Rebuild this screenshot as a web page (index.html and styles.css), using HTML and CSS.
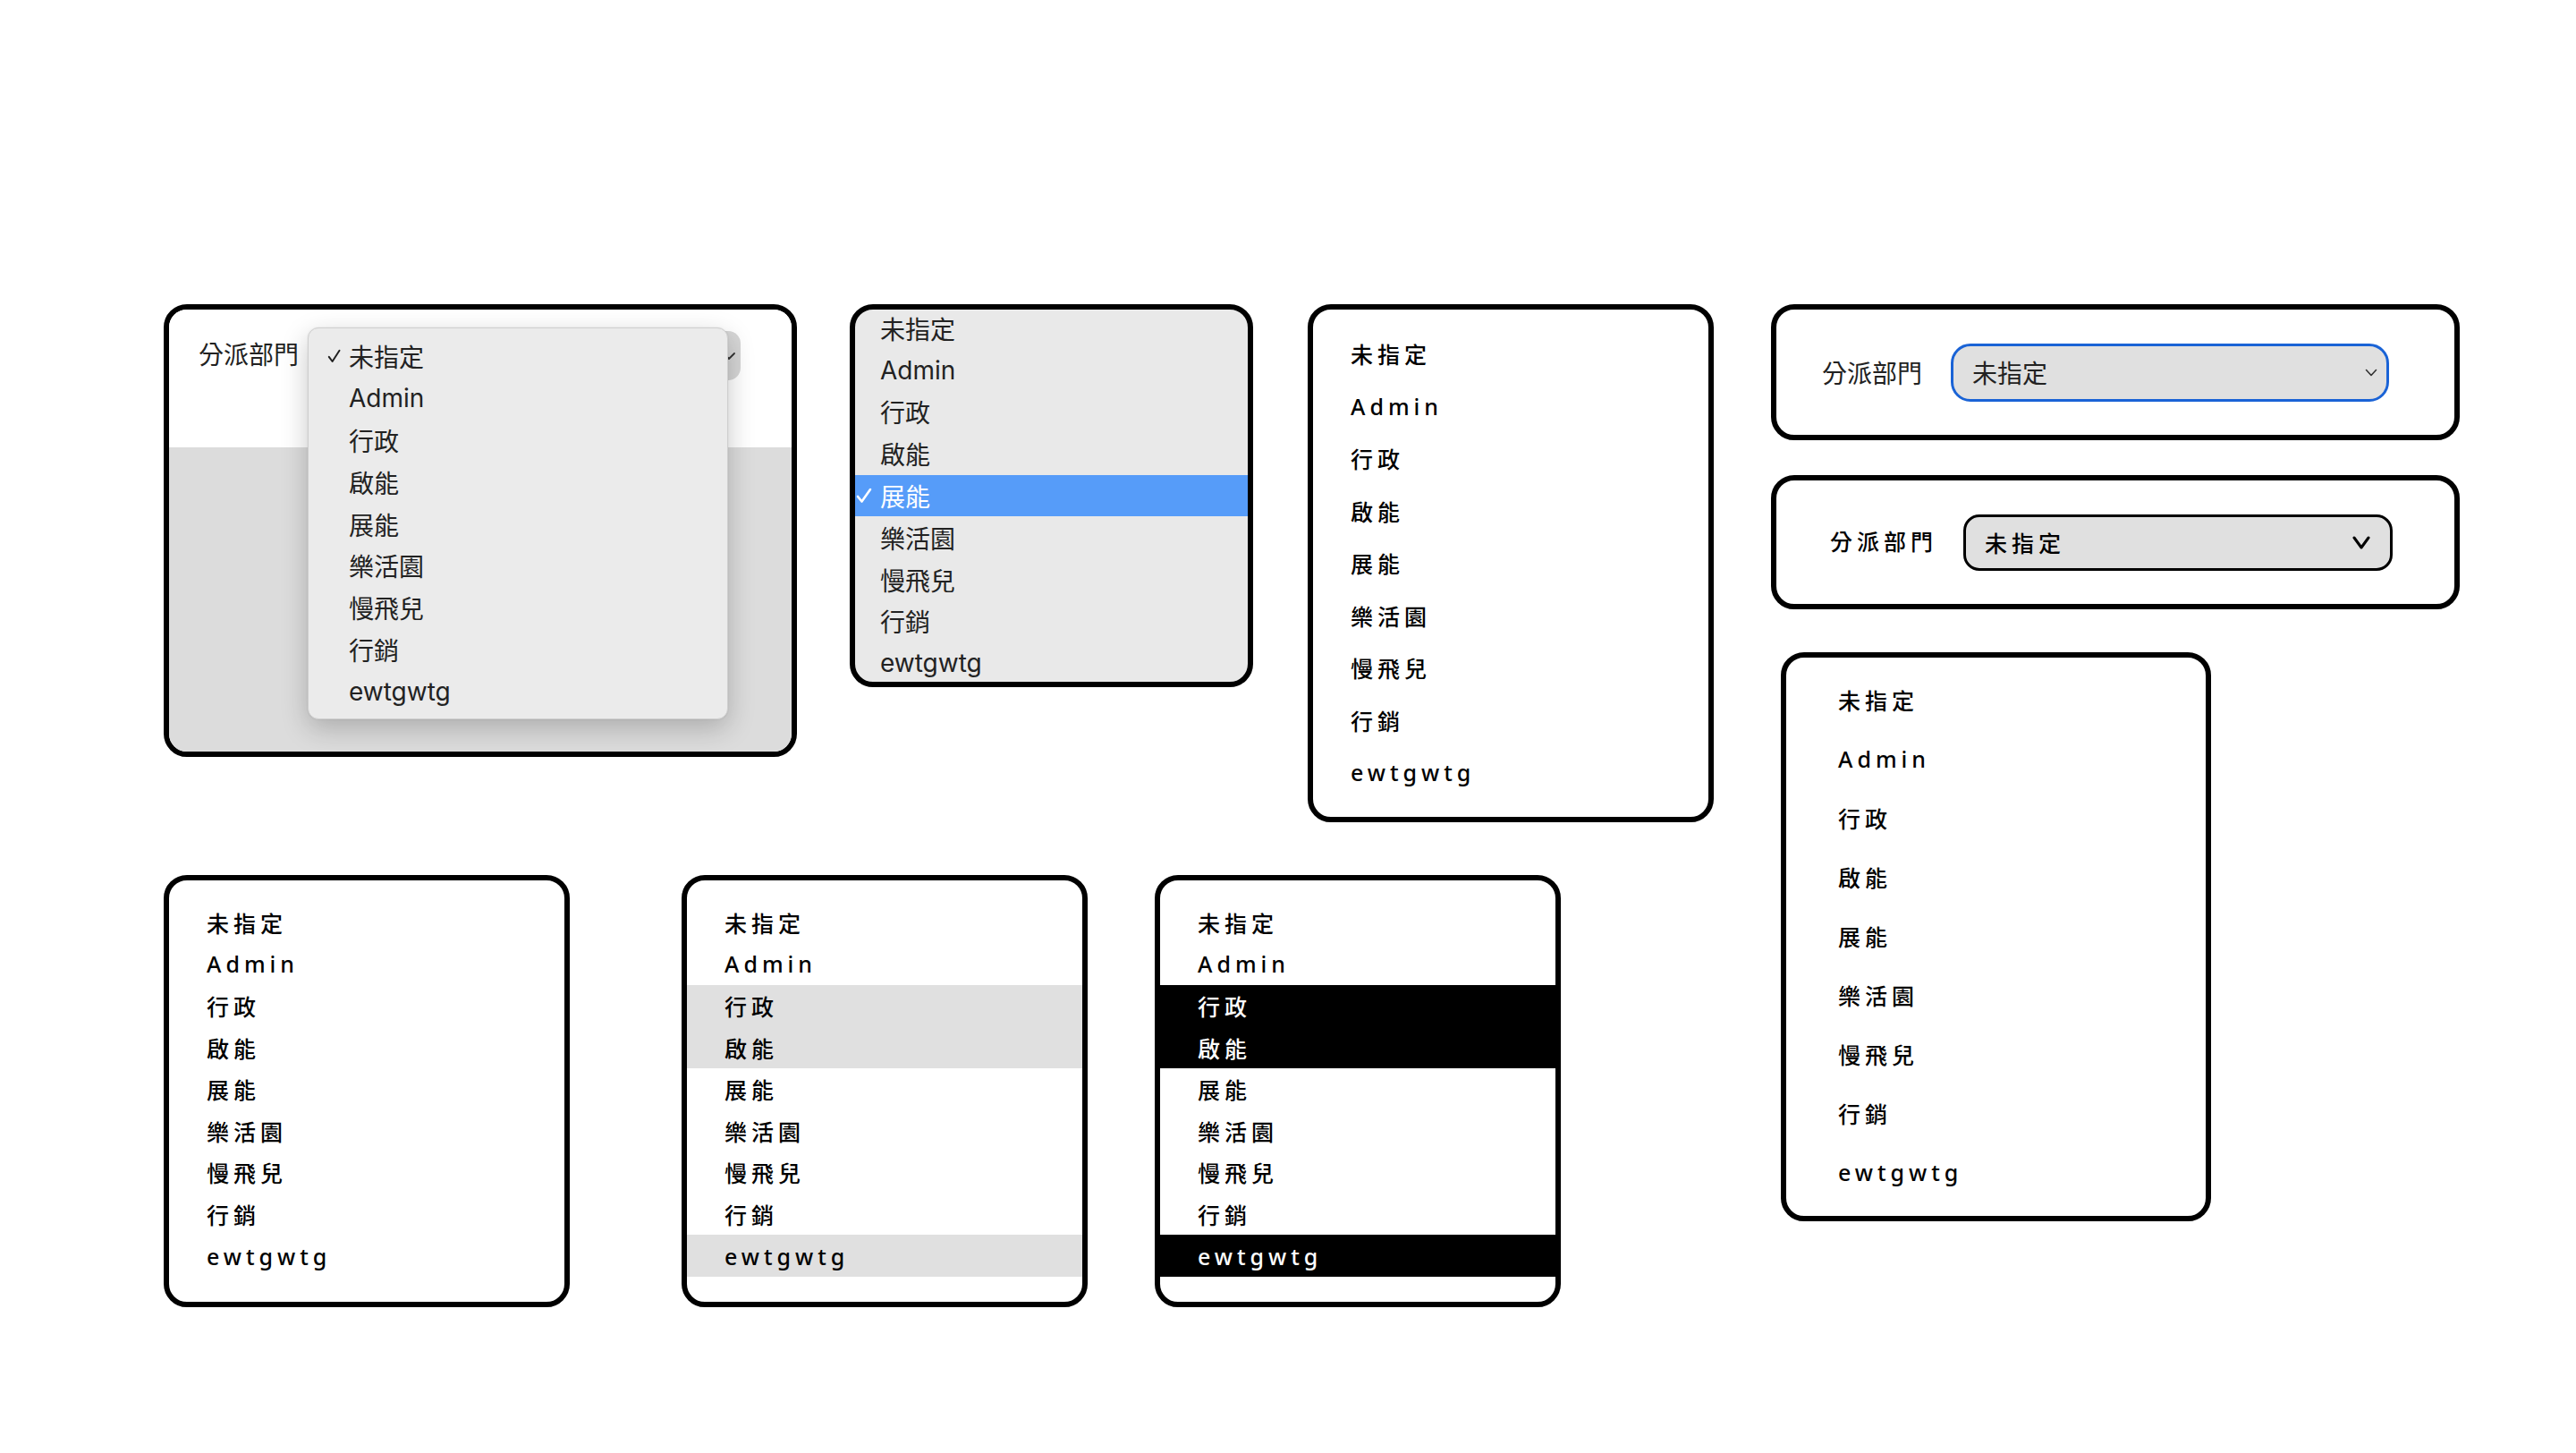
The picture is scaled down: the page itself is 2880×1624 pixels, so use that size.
FILE: index.html
```html
<!DOCTYPE html>
<html lang="zh-Hant">
<head>
<meta charset="utf-8">
<title>分派部門 select variants</title>
<link rel="stylesheet" href="styles.css">
</head>
<body>
<main class="stage">
  <div class="left">
    <div class="row">
      <section class="panel p-open">
        <div class="open-top">
          <span class="mac label-open">分派部門</span>
          <div class="mac-select">
            <svg class="chev-open" width="14" height="8" viewBox="0 0 14 8"><path d="M1 1 L7 7 L13 1" fill="none" stroke="#333" stroke-width="1.8" stroke-linecap="round" stroke-linejoin="round"/></svg>
          </div>
        </div>
        <div class="open-bottom"></div>
        <ul class="menu mac">
          <li class="mrow"><span class="chk"><svg width="15" height="16" viewBox="0 0 15 16"><path d="M1.8 8.8 L5.6 14 L13.5 1.8" fill="none" stroke="currentColor" stroke-width="2" stroke-linecap="round" stroke-linejoin="round"/></svg></span>未指定</li>
          <li class="mrow"><span class="chk"></span>Admin</li>
          <li class="mrow"><span class="chk"></span>行政</li>
          <li class="mrow"><span class="chk"></span>啟能</li>
          <li class="mrow"><span class="chk"></span>展能</li>
          <li class="mrow"><span class="chk"></span>樂活園</li>
          <li class="mrow"><span class="chk"></span>慢飛兒</li>
          <li class="mrow"><span class="chk"></span>行銷</li>
          <li class="mrow"><span class="chk"></span>ewtgwtg</li>
        </ul>
      </section>

      <section class="panel p-listbox">
        <ul class="mac listbox">
          <li class="lrow"><span class="chk2"></span>未指定</li>
          <li class="lrow"><span class="chk2"></span>Admin</li>
          <li class="lrow"><span class="chk2"></span>行政</li>
          <li class="lrow"><span class="chk2"></span>啟能</li>
          <li class="lrow sel-blue"><span class="chk2"><svg width="18" height="18" viewBox="0 0 18 18"><path d="M2 10 L6.5 15.5 L16 2" fill="none" stroke="currentColor" stroke-width="2.6" stroke-linecap="round" stroke-linejoin="round"/></svg></span>展能</li>
          <li class="lrow"><span class="chk2"></span>樂活園</li>
          <li class="lrow"><span class="chk2"></span>慢飛兒</li>
          <li class="lrow"><span class="chk2"></span>行銷</li>
          <li class="lrow"><span class="chk2"></span>ewtgwtg</li>
        </ul>
      </section>

      <section class="panel p-loose">
        <ul class="spaced">
          <li>未指定</li><li>Admin</li><li>行政</li><li>啟能</li><li>展能</li><li>樂活園</li><li>慢飛兒</li><li>行銷</li><li>ewtgwtg</li>
        </ul>
      </section>
    </div>

    <div class="row row-bottom">
      <section class="panel p-plain">
        <ul class="spaced">
          <li class="prow">未指定</li><li class="prow">Admin</li><li class="prow">行政</li><li class="prow">啟能</li><li class="prow">展能</li><li class="prow">樂活園</li><li class="prow">慢飛兒</li><li class="prow">行銷</li><li class="prow">ewtgwtg</li>
        </ul>
      </section>
      <section class="panel p-plain p-gray">
        <ul class="spaced">
          <li class="prow">未指定</li><li class="prow">Admin</li><li class="prow hl-gray">行政</li><li class="prow hl-gray">啟能</li><li class="prow">展能</li><li class="prow">樂活園</li><li class="prow">慢飛兒</li><li class="prow">行銷</li><li class="prow hl-gray">ewtgwtg</li>
        </ul>
      </section>
      <section class="panel p-plain p-black">
        <ul class="spaced">
          <li class="prow">未指定</li><li class="prow">Admin</li><li class="prow hl-black">行政</li><li class="prow hl-black">啟能</li><li class="prow">展能</li><li class="prow">樂活園</li><li class="prow">慢飛兒</li><li class="prow">行銷</li><li class="prow hl-black">ewtgwtg</li>
        </ul>
      </section>
    </div>
  </div>

  <div class="right">
    <section class="panel p-field">
      <span class="mac label-field">分派部門</span>
      <div class="field-select focus">
        <span class="mac">未指定</span>
        <svg class="chev-small" width="14" height="9" viewBox="0 0 14 9"><path d="M1.5 1.5 L7 7.5 L12.5 1.5" fill="none" stroke="#333" stroke-width="1.6" stroke-linecap="round" stroke-linejoin="round"/></svg>
      </div>
    </section>

    <section class="panel p-field2">
      <span class="spaced label-field2">分派部門</span>
      <div class="field-select2">
        <span class="spaced">未指定</span>
        <svg class="chev-big" width="20" height="15" viewBox="0 0 20 15"><path d="M2 2 L10 13 L18 2" fill="none" stroke="#000" stroke-width="3" stroke-linecap="round" stroke-linejoin="round"/></svg>
      </div>
    </section>

    <section class="panel p-tall">
      <ul class="spaced">
        <li>未指定</li><li>Admin</li><li>行政</li><li>啟能</li><li>展能</li><li>樂活園</li><li>慢飛兒</li><li>行銷</li><li>ewtgwtg</li>
      </ul>
    </section>
  </div>
</main>
</body>
</html>
```

FILE: styles.css
```css
* { box-sizing: border-box; margin: 0; padding: 0; }
html, body { background: #fff; }
body {
  width: 2880px;
  height: 1624px;
  overflow: hidden;
  font-family: "Noto Sans", "Noto Sans CJK TC", sans-serif;
  color: #000;
}
ul { list-style: none; }

.stage { display: flex; align-items: flex-start; padding: 340px 0 0 183px; }
.left { display: flex; flex-direction: column; }
.row { display: flex; align-items: flex-start; }
.row-bottom { margin-top: 59px; }
.right { display: flex; flex-direction: column; margin-left: 64px; }

.panel {
  border: 6px solid #000;
  border-radius: 26px;
  background: #fff;
  overflow: hidden;
}

/* fonts */
.mac {
  font-family: "Inter", "Noto Sans CJK TC", sans-serif;
  font-size: 28px;
  color: #222;
}
.spaced {
  font-family: "Noto Sans", "Noto Sans CJK TC", sans-serif;
  font-size: 25px;
  font-weight: 500;
  letter-spacing: 5px;
  color: #000;
}

/* panel 1: open native popup */
.p-open {
  width: 708px;
  height: 506px;
  position: relative;
  display: flex;
  flex-direction: column;
}
.open-top {
  height: 154px;
  display: flex;
  align-items: flex-start;
  padding: 24px 0 0 33px;
  background: #fff;
}
.label-open { line-height: 55px; }
.mac-select {
  width: 484px;
  height: 55px;
  margin-left: 10px;
  border-radius: 14px;
  background: #d6d6d6;
  display: flex;
  align-items: center;
  justify-content: flex-end;
  padding-right: 6px;
}
.open-bottom { flex: 1; background: #dcdcdc; }
.menu {
  position: absolute;
  left: 155px;
  top: 20px;
  width: 470px;
  height: 438px;
  padding: 8px 0 0 21px;
  background: #ebebeb;
  border: 1px solid #cfcfcf;
  border-radius: 12px;
  box-shadow: 0 10px 30px rgba(0, 0, 0, 0.22), 0 0 2px rgba(0, 0, 0, 0.1);
}
.mrow { height: 46.8px; display: flex; align-items: center; }
.chk { width: 24px; display: flex; align-items: center; color: #222; }

/* panel 2: listbox */
.p-listbox {
  width: 451px;
  height: 428px;
  margin-left: 59px;
  background: #e9e9e9;
}
.listbox { margin-top: -2.5px; }
.lrow { height: 46.8px; display: flex; align-items: center; }
.chk2 { width: 28px; display: flex; align-items: center; padding-left: 1px; }
.sel-blue { background: #569cf9; color: #fff; }

/* panel 3 */
.p-loose { width: 454px; margin-left: 61px; padding: 20px 0 20px 42px; }
.p-loose li { height: 58.5px; display: flex; align-items: center; }

/* bottom row */
.p-plain { width: 454px; padding: 24px 0 28px; }
.p-gray { margin-left: 125px; }
.p-black { margin-left: 75px; }
.prow { height: 46.6px; display: flex; align-items: center; padding-left: 42px; }
.hl-gray { background: #e0e0e0; }
.hl-black { background: #000; color: #fff; }

/* panel 4: focused select */
.p-field {
  width: 770px;
  height: 152px;
  display: flex;
  align-items: center;
  padding-left: 51px;
}
.field-select {
  width: 490px;
  height: 65px;
  margin-left: 32px;
  border: 3px solid #1a63d6;
  border-radius: 22px;
  background: #e0e0e0;
  display: flex;
  align-items: center;
  justify-content: space-between;
  padding: 0 10px 0 21px;
}

/* panel 5: custom select */
.p-field2 {
  width: 770px;
  height: 150px;
  margin-top: 39px;
  display: flex;
  align-items: center;
  padding-left: 60px;
}
.label-field2 { margin-top: -4px; }
.field-select2 {
  width: 480px;
  height: 63px;
  margin-left: 29px;
  border: 3px solid #000;
  border-radius: 18px;
  background: #e0e0e0;
  display: flex;
  align-items: center;
  justify-content: space-between;
  padding: 0 22px 0 21px;
}

/* panel 6 */
.p-tall { width: 481px; margin: 48px 0 0 11px; padding: 14px 0 16px 58px; }
.p-tall li { height: 66px; display: flex; align-items: center; }
```
